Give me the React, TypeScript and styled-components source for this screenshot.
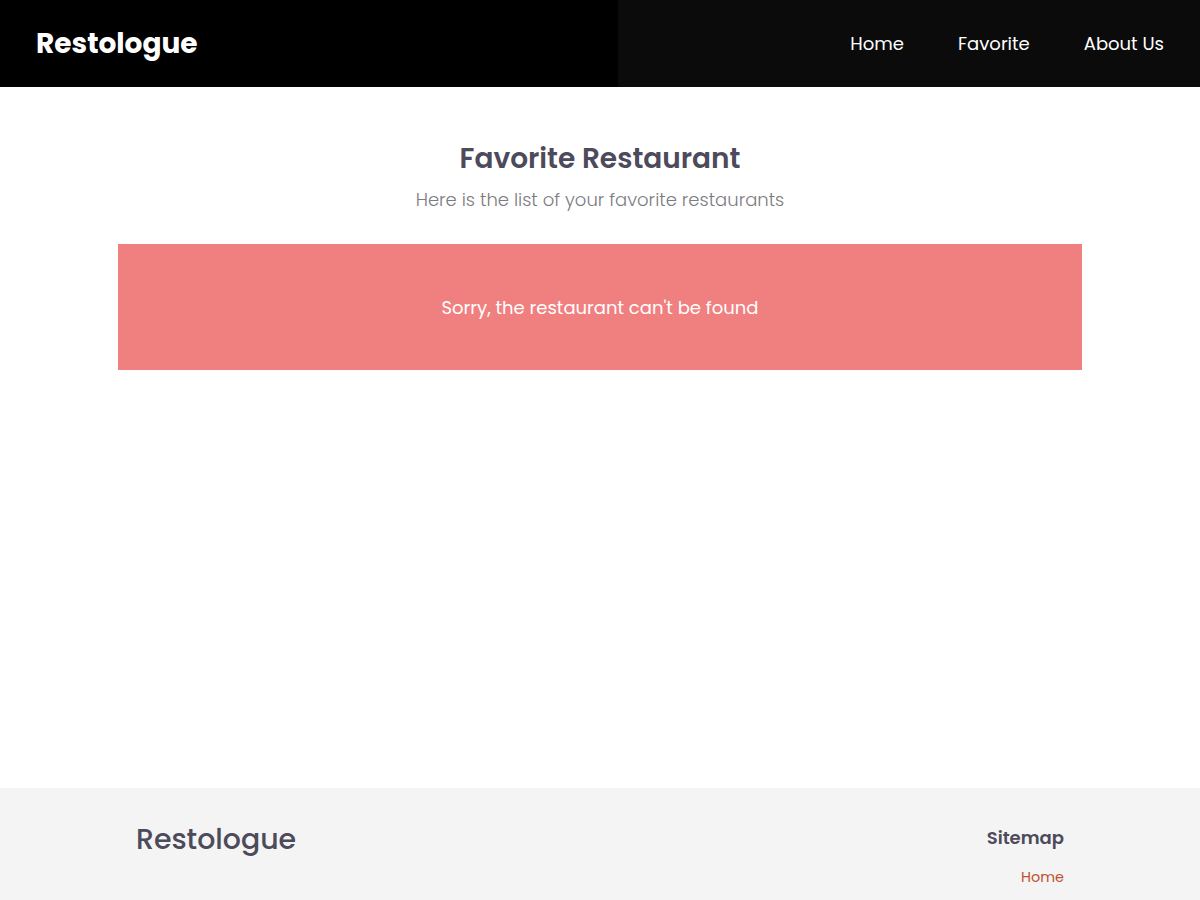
import React from "react";
import styled, { createGlobalStyle } from "styled-components";

const Global = createGlobalStyle`
  * { box-sizing: border-box; }
  body {
    margin: 0;
    font-family: "Poppins", Inter, "Noto Sans", sans-serif;
    background: #ffffff;
  }
  a { text-decoration: none; }
`;

const Header = styled.header`
  display: grid;
  grid-template-columns: 618px 1fr;
  height: 87px;
`;

const Brand = styled.div`
  background: #000000;
  display: flex;
  align-items: center;
  padding-left: 36px;
  color: #ffffff;
  font-size: 28px;
  font-weight: 700;
`;

const Nav = styled.nav`
  background: #0b0b0b;
  display: flex;
  justify-content: flex-end;
  align-items: center;
  padding-right: 36px;
  gap: 54px;
`;

const NavLink = styled.a`
  color: #ffffff;
  font-size: 18px;
  font-weight: 400;
`;

const Main = styled.main`
  min-height: 701px;
  padding: 56px 118px 40px;
  display: flex;
  flex-direction: column;
  align-items: center;
`;

const Title = styled.h2`
  margin: 0;
  font-size: 28px;
  font-weight: 600;
  color: #4c4a5b;
  line-height: 32px;
`;

const Subtitle = styled.p`
  margin: 11px 0 0;
  font-size: 18px;
  font-weight: 300;
  color: #7c7c80;
  line-height: 27px;
`;

const EmptyBox = styled.div`
  margin-top: 31px;
  width: 100%;
  height: 126px;
  background: #f08080;
  display: flex;
  align-items: center;
  justify-content: center;
  color: #ffffff;
  font-size: 18px;
  font-weight: 400;
`;

const Footer = styled.footer`
  background: #f4f4f4;
  padding: 33px 136px 40px;
  display: flex;
  justify-content: space-between;
  align-items: flex-start;
`;

const FooterBrand = styled.div`
  font-size: 28.4px;
  font-weight: 500;
  color: #4c4a5b;
  line-height: 36px;
`;

const Sitemap = styled.div`
  margin-top: 5px;
  display: flex;
  flex-direction: column;
  align-items: flex-end;
  gap: 17px;
`;

const SitemapTitle = styled.h3`
  margin: 0;
  font-size: 18px;
  font-weight: 600;
  color: #4c4a5b;
  line-height: 24px;
`;

const SitemapLink = styled.a`
  font-size: 14.4px;
  color: #c0512f;
  line-height: 20px;
`;

export default function App() {
  return (
    <>
      <Global />
      <Header>
        <Brand>Restologue</Brand>
        <Nav>
          <NavLink href="#">Home</NavLink>
          <NavLink href="#">Favorite</NavLink>
          <NavLink href="#">About Us</NavLink>
        </Nav>
      </Header>
      <Main>
        <Title>Favorite Restaurant</Title>
        <Subtitle>Here is the list of your favorite restaurants</Subtitle>
        <EmptyBox>Sorry, the restaurant can't be found</EmptyBox>
      </Main>
      <Footer>
        <FooterBrand>Restologue</FooterBrand>
        <Sitemap>
          <SitemapTitle>Sitemap</SitemapTitle>
          <SitemapLink href="#">Home</SitemapLink>
        </Sitemap>
      </Footer>
    </>
  );
}
